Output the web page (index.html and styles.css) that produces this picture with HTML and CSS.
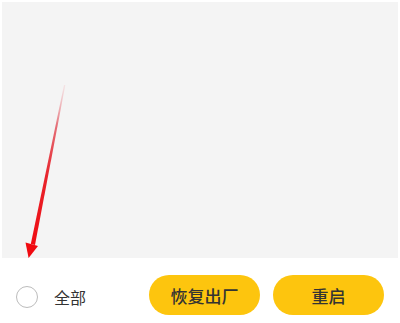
FILE: index.html
```html
<!DOCTYPE html>
<html lang="zh-CN">
<head>
  <meta charset="UTF-8" />
  <meta name="viewport" content="width=device-width, initial-scale=1.0"/>
  <title>恢复出厂</title>
  <link rel="stylesheet" href="styles.css">
</head>
<body>
  <div class="screen">
    <div class="panel"></div>

    <div class="footer">
      <label class="select-all">
        <span class="radio"></span>
        <span class="select-text">全部</span>
      </label>
      <div class="actions">
        <button class="btn">恢复出厂</button>
        <button class="btn">重启</button>
      </div>
    </div>

    <!-- 标注箭头 -->
    <svg class="arrow" viewBox="0 0 400 323" width="400" height="323">
      <defs>
        <linearGradient id="shaft" x1="64" y1="85" x2="31" y2="250" gradientUnits="userSpaceOnUse">
          <stop offset="0" stop-color="#f3c9cc" stop-opacity="0.4"/>
          <stop offset="0.25" stop-color="#e46d76"/>
          <stop offset="0.55" stop-color="#e8242c"/>
          <stop offset="1" stop-color="#f00a10"/>
        </linearGradient>
      </defs>
      <polygon points="64,85 65.3,85 35,245 30.8,244" fill="url(#shaft)"/>
      <polygon points="25.5,242.5 38,246 28.6,258" fill="#f00a10"/>
    </svg>
  </div>
</body>
</html>
```

FILE: styles.css
```css
body {
  margin: 0;
  padding: 0;
  font-family: 'Noto Sans CJK SC', 'Noto Sans', sans-serif;
  background-color: #fff;
  color: #2b2b2b;
}
.screen {
  position: relative;
  width: 400px;
  height: 323px;
  overflow: hidden;
  background-color: #fff;
}
.panel {
  margin: 2px 2px 0 2px;
  height: 256px;
  background-color: #f4f4f4;
}
.footer {
  display: flex;
  align-items: center;
  justify-content: space-between;
  padding: 17px 16px 0 16px;
}
.select-all {
  display: flex;
  align-items: center;
  gap: 16px;
  margin-top: 3px;
}
.radio {
  width: 20px;
  height: 20px;
  border: 1.5px solid #bcbcbc;
  border-radius: 50%;
}
.select-text {
  font-size: 16px;
  color: #333;
}
.actions {
  display: flex;
  gap: 13px;
}
.btn {
  width: 111px;
  height: 40px;
  border: none;
  border-radius: 20px;
  background-color: #fdc50e;
  color: #333;
  font-family: inherit;
  font-size: 17px;
  font-weight: 500;
  padding: 0;
  cursor: pointer;
}
.arrow {
  position: absolute;
  left: 0;
  top: 0;
  pointer-events: none;
}
```
